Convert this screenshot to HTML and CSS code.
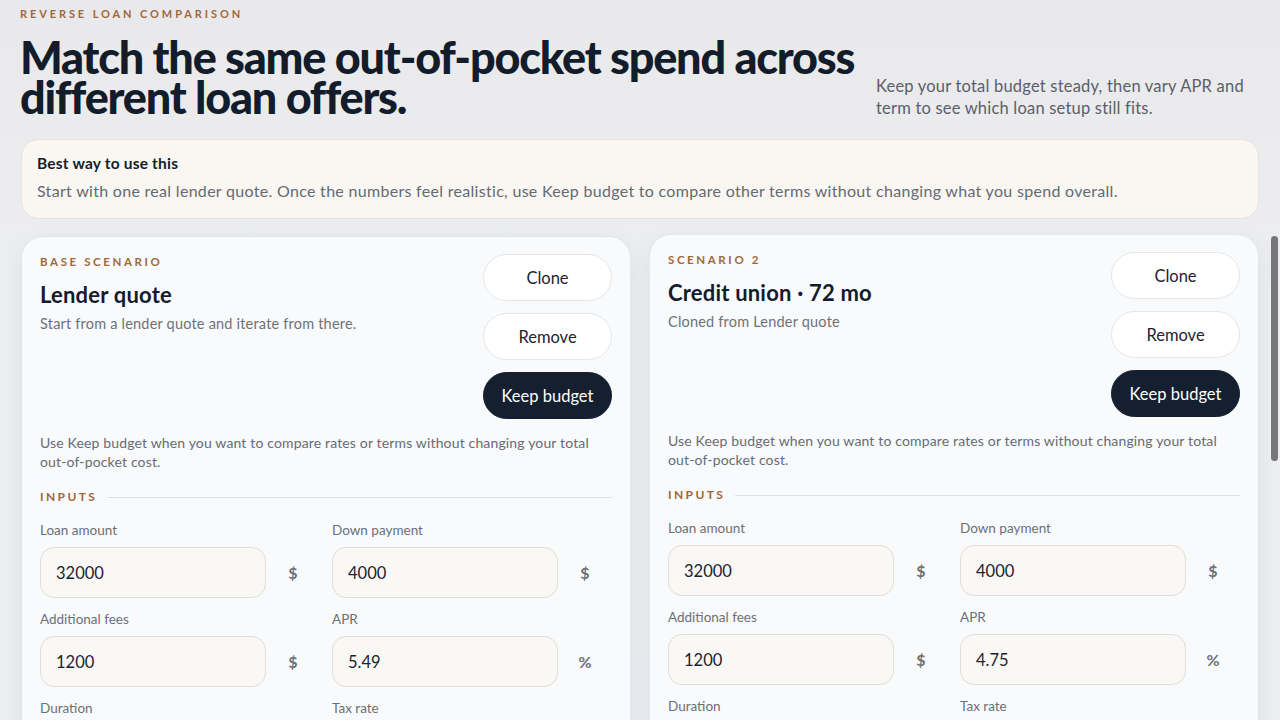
FILE: index.html
```html
<!DOCTYPE html>
<html lang="en">
<head>
<meta charset="utf-8">
<title>Reverse loan comparison</title>
<link rel="stylesheet" href="styles.css">
</head>
<body>
<main class="page">
  <header class="hero">
    <div class="hero-main">
      <p class="eyebrow">Reverse loan comparison</p>
      <h1 class="title">Match the same out-of-pocket spend across different loan offers.</h1>
    </div>
    <p class="hero-blurb">Keep your total budget steady, then vary APR and term to see which loan setup still fits.</p>
  </header>

  <section class="tip">
    <h2 class="tip-title">Best way to use this</h2>
    <p class="tip-text">Start with one real lender quote. Once the numbers feel realistic, use Keep budget to compare other terms without changing what you spend overall.</p>
  </section>

  <section class="cards">
    <article class="card">
      <div class="card-head">
        <div class="card-info">
          <p class="card-eyebrow">Base scenario</p>
          <h3 class="card-title">Lender quote</h3>
          <p class="card-sub">Start from a lender quote and iterate from there.</p>
        </div>
        <div class="card-actions">
          <button class="btn">Clone</button>
          <button class="btn">Remove</button>
          <button class="btn btn-dark">Keep budget</button>
        </div>
      </div>
      <p class="card-note">Use Keep budget when you want to compare rates or terms without changing your total out-of-pocket cost.</p>
      <div class="section-label"><span>Inputs</span></div>
      <div class="fields">
        <div class="field"><label class="field-label">Loan amount</label><div class="field-row"><div class="input">32000</div><span class="unit">$</span></div></div>
        <div class="field"><label class="field-label">Down payment</label><div class="field-row"><div class="input">4000</div><span class="unit">$</span></div></div>
        <div class="field"><label class="field-label">Additional fees</label><div class="field-row"><div class="input">1200</div><span class="unit">$</span></div></div>
        <div class="field"><label class="field-label">APR</label><div class="field-row"><div class="input">5.49</div><span class="unit">%</span></div></div>
        <div class="field"><label class="field-label">Duration</label><div class="field-row"><div class="input">60</div><span class="unit">mo</span></div></div>
        <div class="field"><label class="field-label">Tax rate</label><div class="field-row"><div class="input">6</div><span class="unit">%</span></div></div>
      </div>
    </article>

    <article class="card card-raised">
      <div class="card-head">
        <div class="card-info">
          <p class="card-eyebrow">Scenario 2</p>
          <h3 class="card-title">Credit union · 72 mo</h3>
          <p class="card-sub">Cloned from Lender quote</p>
        </div>
        <div class="card-actions">
          <button class="btn">Clone</button>
          <button class="btn">Remove</button>
          <button class="btn btn-dark">Keep budget</button>
        </div>
      </div>
      <p class="card-note">Use Keep budget when you want to compare rates or terms without changing your total out-of-pocket cost.</p>
      <div class="section-label"><span>Inputs</span></div>
      <div class="fields">
        <div class="field"><label class="field-label">Loan amount</label><div class="field-row"><div class="input">32000</div><span class="unit">$</span></div></div>
        <div class="field"><label class="field-label">Down payment</label><div class="field-row"><div class="input">4000</div><span class="unit">$</span></div></div>
        <div class="field"><label class="field-label">Additional fees</label><div class="field-row"><div class="input">1200</div><span class="unit">$</span></div></div>
        <div class="field"><label class="field-label">APR</label><div class="field-row"><div class="input">4.75</div><span class="unit">%</span></div></div>
        <div class="field"><label class="field-label">Duration</label><div class="field-row"><div class="input">72</div><span class="unit">mo</span></div></div>
        <div class="field"><label class="field-label">Tax rate</label><div class="field-row"><div class="input">6</div><span class="unit">%</span></div></div>
      </div>
    </article>
  </section>
</main>
<div class="scroll-thumb" aria-hidden="true"></div>
</body>
</html>
```

FILE: styles.css
```css
* { box-sizing: border-box; }
html, body { margin: 0; padding: 0; }
body {
  background: linear-gradient(180deg, #e9e9eb 0%, #edeef1 40%, #eceef2 100%);
  font-family: "Lato", "Noto Sans", sans-serif;
  color: #131d2c;
  overflow: hidden;
  height: 720px;
}
p, h1, h2, h3 { margin: 0; }

.page {
  padding: 7px 21px 40px 21px;
}

.hero {
  display: flex;
  justify-content: space-between;
  align-items: flex-end;
}
.hero-main {
  flex: 1;
  min-width: 0;
}
.eyebrow {
  margin-left: -1px;
  font-size: 11px;
  font-weight: 700;
  letter-spacing: 2.9px;
  text-transform: uppercase;
  color: #a0683b;
  line-height: 14px;
}
.title {
  margin-top: 16px;
  margin-left: -1px;
  font-size: 45px;
  font-weight: 900;
  line-height: 40px;
  letter-spacing: -1.2px;
  color: #121c2b;
  width: 850px;
}
.hero-blurb {
  flex-shrink: 0;
  width: 383px;
  font-size: 16.5px;
  line-height: 22px;
  letter-spacing: 0.2px;
  color: #5a6069;
  margin-bottom: -2px;
}

.tip {
  margin-top: 22px;
  background: #faf7f3;
  border: 1px solid #e8e3dc;
  border-radius: 18px;
  padding: 13px 16px 16px 15px;
}
.tip-title {
  font-size: 15.5px;
  font-weight: 700;
  line-height: 20px;
  letter-spacing: 0.2px;
  color: #141d2b;
}
.tip-text {
  margin-top: 7px;
  font-size: 16px;
  line-height: 22px;
  color: #646a72;
  letter-spacing: 0.3px;
}

.cards {
  margin-top: 17px;
  display: grid;
  grid-template-columns: 1fr 1fr;
  gap: 18px;
}
.card {
  background: #f9fafb;
  border: 1px solid #e4e6ea;
  border-radius: 22px;
  padding: 17px 18px 20px 18px;
  box-shadow: 0 8px 24px rgba(20, 30, 50, 0.06);
  height: 560px;
}
.card-raised { transform: translateY(-2px); }

.card-head {
  display: flex;
  justify-content: space-between;
  gap: 16px;
}
.card-info { padding-top: 1px; }
.card-eyebrow {
  font-size: 11.5px;
  font-weight: 700;
  letter-spacing: 2.6px;
  text-transform: uppercase;
  color: #a0683b;
  line-height: 14px;
}
.card-title {
  margin-top: 13px;
  font-size: 22px;
  font-weight: 700;
  line-height: 26px;
  letter-spacing: 0.2px;
  color: #131c2b;
}
.card-sub {
  margin-top: 7px;
  font-size: 14.5px;
  line-height: 18px;
  letter-spacing: 0.2px;
  color: #6c727a;
}
.card-actions {
  display: flex;
  flex-direction: column;
  gap: 12px;
  width: 129px;
}
.btn {
  height: 47px;
  border-radius: 999px;
  border: 1px solid #e6e6e6;
  background: #ffffff;
  font-family: inherit;
  font-size: 16.5px;
  color: #1c2430;
  cursor: pointer;
}
.btn-dark {
  background: #14202f;
  border-color: #14202f;
  color: #ffffff;
}

.card-note {
  margin-top: 14px;
  font-size: 14px;
  line-height: 19px;
  letter-spacing: 0.15px;
  color: #666c74;
}

.section-label {
  margin-top: 18px;
  display: flex;
  align-items: center;
  gap: 10px;
  font-size: 12px;
  font-weight: 700;
  letter-spacing: 2.4px;
  text-transform: uppercase;
  color: #a0683b;
  line-height: 16px;
}
.section-label::after {
  content: "";
  flex: 1;
  height: 1px;
  background: #e0e2e5;
}

.fields {
  margin-top: 17px;
  display: grid;
  grid-template-columns: 1fr 1fr;
  column-gap: 12px;
  row-gap: 13px;
}
.field-label {
  display: block;
  font-size: 13.5px;
  line-height: 17px;
  color: #6a7078;
}
.field-row {
  margin-top: 8px;
  display: flex;
  align-items: center;
}
.input {
  flex: 1;
  height: 51px;
  border: 1px solid #e2ddd6;
  border-radius: 14px;
  background: #faf8f4;
  padding: 0 15px;
  display: flex;
  align-items: center;
  font-size: 16.5px;
  color: #1b2330;
}
.unit {
  width: 54px;
  text-align: center;
  font-size: 16px;
  font-weight: 700;
  color: #6b7079;
}

.scroll-thumb {
  position: fixed;
  left: 1271px;
  top: 236px;
  width: 7px;
  height: 225px;
  border-radius: 4px;
  background: #77777b;
}
```
